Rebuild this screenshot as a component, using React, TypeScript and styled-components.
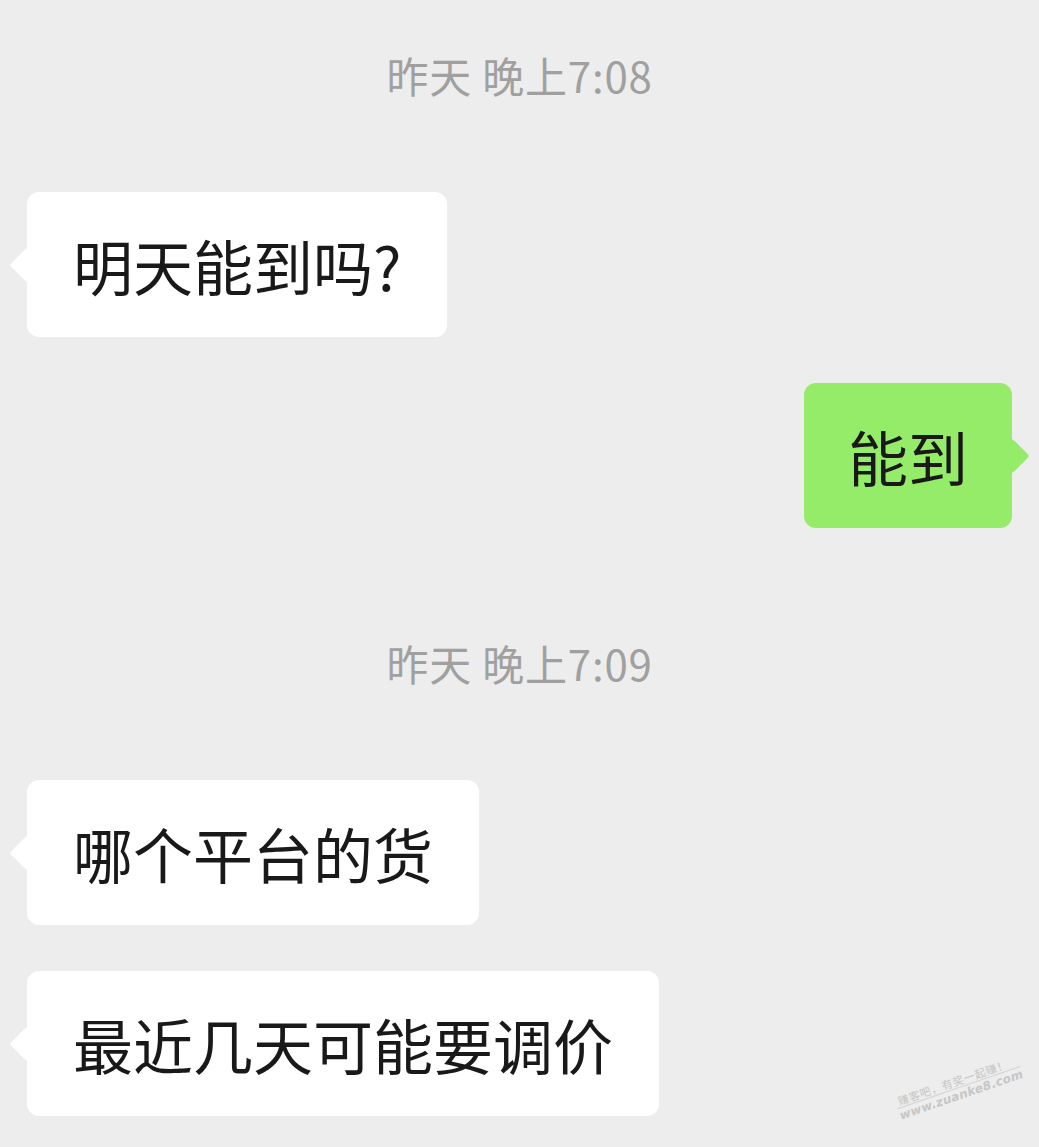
import * as React from 'react';
import styled, { createGlobalStyle, css } from 'styled-components';

const GlobalStyle = createGlobalStyle`
  html, body {
    margin: 0;
    padding: 0;
    background: #ededed;
  }
  body {
    font-family: "Noto Sans CJK SC", "Noto Sans", sans-serif;
  }
`;

const Page = styled.div`
  position: relative;
  min-height: 1147px;
  padding: 50px 27px 0;
  box-sizing: border-box;
  display: flex;
  flex-direction: column;
  overflow: hidden;
`;

const Time = styled.div<{ first?: boolean }>`
  margin: ${p => (p.first ? '0' : '110px')} 0 92px;
  height: 50px;
  line-height: 50px;
  text-align: center;
  font-size: 42px;
  letter-spacing: 0.8px;
  color: #a0a0a0;
`;

const Row = styled.div<{ self?: boolean }>`
  display: flex;
  justify-content: ${p => (p.self ? 'flex-end' : 'flex-start')};
  & + & {
    margin-top: 46px;
  }
`;

const Bubble = styled.div<{ self?: boolean }>`
  position: relative;
  padding: 30px ${p => (p.self ? '44px 30px 44px' : '46px')};
  border-radius: 12px;
  font-size: 60px;
  line-height: 85px;
  color: #191919;
  background: ${p => (p.self ? '#95ec69' : '#ffffff')};

  &::before {
    content: '';
    position: absolute;
    top: 50%;
    width: 25px;
    height: 25px;
    border-radius: 3px;
    background: inherit;
    ${p =>
      p.self
        ? css`
            right: 0;
            transform: translate(50%, -50%) rotate(45deg);
          `
        : css`
            left: 0;
            transform: translate(-50%, -50%) rotate(45deg);
          `}
  }
`;

const Watermark = styled.div`
  position: absolute;
  left: 893px;
  top: 1096px;
  transform: rotate(-19deg);
  transform-origin: left top;
  color: #c6c6c6;
  line-height: 1.2;
  white-space: nowrap;
  pointer-events: none;
`;

const MarkTitle = styled.div`
  font-size: 11px;
  letter-spacing: 0.6px;
  padding-left: 3px;
`;

const MarkUrl = styled.div`
  font-family: "DejaVu Sans", sans-serif;
  font-size: 12px;
  font-weight: bold;
  font-style: italic;
  letter-spacing: 0.3px;
  border-top: 1px solid #d2d2d2;
`;

type Msg = { self?: boolean; text: string };

const groups: { time: string; msgs: Msg[] }[] = [
  {
    time: '昨天 晚上7:08',
    msgs: [{ text: '明天能到吗?' }, { self: true, text: '能到' }]
  },
  {
    time: '昨天 晚上7:09',
    msgs: [{ text: '哪个平台的货' }, { text: '最近几天可能要调价' }]
  }
];

const App = () => (
  <Page>
    <GlobalStyle />
    {groups.map((g, i) => (
      <React.Fragment key={g.time}>
        <Time first={i === 0}>{g.time}</Time>
        <div>
          {g.msgs.map(m => (
            <Row key={m.text} self={m.self}>
              <Bubble self={m.self}>{m.text}</Bubble>
            </Row>
          ))}
        </div>
      </React.Fragment>
    ))}
    <Watermark>
      <MarkTitle>赚客吧，有奖一起赚！</MarkTitle>
      <MarkUrl>www.zuanke8.com</MarkUrl>
    </Watermark>
  </Page>
);

export default App;
